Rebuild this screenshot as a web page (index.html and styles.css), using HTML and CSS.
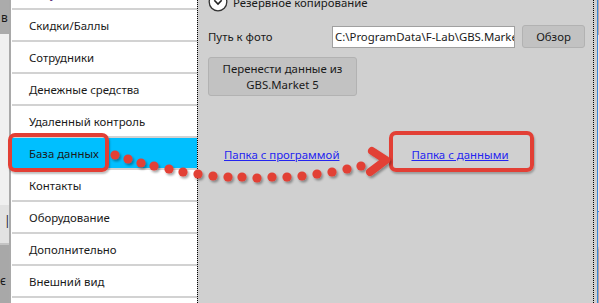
FILE: index.html
```html
<!DOCTYPE html>
<html lang="ru">
<head>
<meta charset="utf-8">
<link rel="stylesheet" href="styles.css">
</head>
<body>
<div class="screen">
  <div class="back-left">
    <div class="bl-top">в</div>
    <div class="bl-mid"></div>
    <div class="bl-low">|</div>
    <div class="bl-bot">іє</div>
  </div>
  <div class="list-frame">
    <ul class="menu">
      <li class="item muted">Документы и печать</li>
      <li class="item">Скидки/Баллы</li>
      <li class="item">Сотрудники</li>
      <li class="item">Денежные средства</li>
      <li class="item">Удаленный контроль</li>
      <li class="item selected">База данных</li>
      <li class="item">Контакты</li>
      <li class="item">Оборудование</li>
      <li class="item">Дополнительно</li>
      <li class="item">Внешний вид</li>
      <li class="item">Прочее</li>
    </ul>
  </div>
  <div class="panel-wrap">
    <div class="panel">
      <div class="content">
        <div class="section-head">
          <svg class="expander" width="20" height="20" viewBox="0 0 20 20">
            <circle cx="10" cy="10" r="8.8" fill="#fff" stroke="#333" stroke-width="1.3"/>
            <path d="M6.3 8.3 L10 12 L13.7 8.3" fill="none" stroke="#222" stroke-width="1.6"/>
          </svg>
          <span>Резервное копирование</span>
        </div>
        <div class="path-row">
          <span class="label">Путь к фото</span>
          <div class="field">C:\ProgramData\F-Lab\GBS.Market</div>
          <button class="btn browse">Обзор</button>
        </div>
        <button class="btn migrate">Перенести данные из<br>GBS.Market 5</button>
        <div class="links">
          <a class="link first">Папка с программой</a>
          <a class="link second">Папка с данными</a>
        </div>
      </div>
    </div>
  </div>
  <div class="back-right">
    <div class="br-top"></div>
    <div class="br-mid"></div>
    <div class="br-low"></div>
    <div class="br-bot"></div>
  </div>
</div>

<div class="callout callout-db"></div>
<div class="callout callout-folder"></div>
<svg class="trail" width="599" height="303" viewBox="0 0 599 303">
  <defs>
    <filter id="sh" x="-50%" y="-50%" width="200%" height="200%">
      <feDropShadow dx="1.5" dy="2" stdDeviation="0.8" flood-color="#000" flood-opacity="0.35"/>
    </filter>
  </defs>
  <g fill="#e23f35" filter="url(#sh)">
    <circle cx="115" cy="155" r="4.6"/>
    <circle cx="128" cy="159" r="4.6"/>
    <circle cx="141" cy="163" r="4.6"/>
    <circle cx="154" cy="166" r="4.6"/>
    <circle cx="169" cy="169" r="4.6"/>
    <circle cx="183" cy="172" r="4.6"/>
    <circle cx="198" cy="174" r="4.6"/>
    <circle cx="213" cy="176" r="4.6"/>
    <circle cx="228" cy="177" r="4.6"/>
    <circle cx="242" cy="177" r="4.6"/>
    <circle cx="257" cy="178" r="4.6"/>
    <circle cx="272" cy="177" r="4.6"/>
    <circle cx="287" cy="177" r="4.6"/>
    <circle cx="302" cy="176" r="4.6"/>
    <circle cx="317" cy="174" r="4.6"/>
    <circle cx="332" cy="172" r="4.6"/>
    <circle cx="347" cy="169" r="4.6"/>
    <circle cx="361" cy="166" r="4.6"/>
    <polyline points="372,151 386,160 370,172" fill="none" stroke="#e23f35" stroke-width="8" stroke-linecap="round" stroke-linejoin="round"/>
  </g>
</svg>
</body>
</html>
```

FILE: styles.css
```css
html, body {
  margin: 0;
  padding: 0;
  width: 599px;
  height: 303px;
  overflow: hidden;
  font-family: "Noto Sans", "Open Sans", sans-serif;
  font-size: 11.4px;
  color: #1a1a1a;
}

.screen {
  display: flex;
  width: 599px;
  height: 303px;
  background: #d0d0d0;
}

/* window behind, left */
.back-left {
  width: 9px;
  display: flex;
  flex-direction: column;
  overflow: hidden;
  border-right: 2px solid #a9a9a9;
  background: #f0f0f0;
  font-size: 12px;
  line-height: 1;
}
.bl-top {
  height: 34px;
  background: #ababab;
  padding-top: 12px;
  box-sizing: border-box;
  padding-left: 1px;
}
.bl-mid {
  height: 171px;
  background: #f0f0f0;
}
.bl-low {
  height: 40px;
  background: #e2e2e2;
  border-bottom: 2px solid #c4c4c4;
  padding-top: 10px;
  padding-left: 4px;
  box-sizing: border-box;
}
.bl-bot {
  flex: 1;
  background: #a8a8a8;
  padding-top: 30px;
  margin-left: -3px;
}

/* list */
.list-frame {
  width: 185px;
  background: #fff;
  overflow: hidden;
  border-left: 1px solid #fff;
}
.menu {
  list-style: none;
  margin: -22px 0 0 0;
  padding: 0;
}
.item {
  height: 30px;
  border-bottom: 2px solid #d2d2d2;
  padding-left: 17px;
  display: flex;
  align-items: center;
  font-size: 11.4px;
  white-space: nowrap;
}
.item.muted {
  color: #5a2a70;
}
.item.selected {
  background: #00bfff;
}

/* settings panel */
.panel-wrap {
  width: 397px;
  padding-right: 3px;
  background: #d0d0d0;
  border-right: 1px solid #3b84d6;
  overflow: hidden;
}
.panel {
  height: 100%;
  border-left: 1px dotted #000;
  border-right: 1px dotted #000;
  box-sizing: border-box;
  overflow: hidden;
}
.content {
  margin-top: -8px;
  padding-left: 10px;
}
.section-head {
  display: flex;
  align-items: center;
  gap: 5px;
  height: 20px;
}
.expander {
  display: block;
}
.path-row {
  display: flex;
  align-items: center;
  margin-top: 13px;
  height: 23px;
}
.label {
  width: 124px;
}
.field {
  width: 183px;
  height: 22px;
  box-sizing: border-box;
  background: #fff;
  border: 1px solid #a0a0a0;
  line-height: 20px;
  padding-left: 2px;
  white-space: nowrap;
  overflow: hidden;
}
.btn {
  font-family: inherit;
  font-size: 11.4px;
  color: #1a1a1a;
  background: #c2c2c2;
  border: 1px solid #b2b2b2;
  border-radius: 3px;
  padding: 0;
}
.browse {
  width: 63px;
  height: 23px;
  margin-left: 7px;
}
.migrate {
  display: block;
  margin-top: 9px;
  width: 149px;
  height: 39px;
  line-height: 16px;
}
.links {
  display: flex;
  margin-top: 48px;
  padding-left: 16px;
  height: 20px;
  align-items: center;
}
.link {
  color: #2424f0;
  text-decoration: underline;
}
.second {
  margin-left: 72px;
}

/* window behind, right */
.back-right {
  flex: 1;
  display: flex;
  flex-direction: column;
}
.br-top { height: 35px; background: #adadad; }
.br-mid { height: 176px; background: #e8e8e8; border-bottom: 1px solid #3b84d6; }
.br-low { height: 35px; background: #d4d4d4; border-bottom: 2px solid #bdbdbd; }
.br-bot { flex: 1; background: #a6a6a6; }

/* annotations */
.callout {
  position: absolute;
  border: 4px solid #e23f35;
  border-radius: 7px;
  box-sizing: border-box;
  box-shadow: 1px 2px 2px rgba(0,0,0,0.25);
}
.callout-db {
  left: 8px;
  top: 133px;
  width: 101px;
  height: 39px;
}
.callout-folder {
  left: 389px;
  top: 131px;
  width: 145px;
  height: 41px;
}
.trail {
  position: absolute;
  left: 0;
  top: 0;
  pointer-events: none;
}
```
